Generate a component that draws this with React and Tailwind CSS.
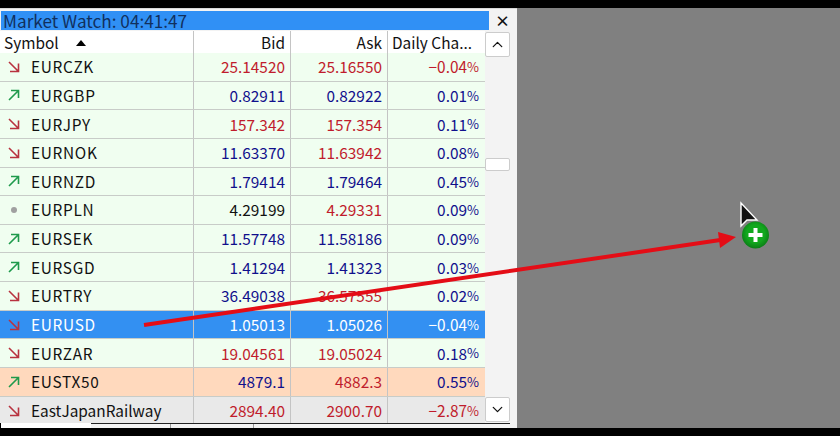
import { ChevronUp, ChevronDown } from 'lucide-react';

const R = 'text-[#c01c2c]';
const B = 'text-[#10108c]';
const K = 'text-[#111111]';

const rows = [
  ['d', 'EURCZK', '25.14520', R, '25.16550', R, '−0.04%', R],
  ['u', 'EURGBP', '0.82911', B, '0.82922', B, '0.01%', B],
  ['d', 'EURJPY', '157.342', R, '157.354', R, '0.11%', B],
  ['d', 'EURNOK', '11.63370', B, '11.63942', R, '0.08%', B],
  ['u', 'EURNZD', '1.79414', B, '1.79464', B, '0.45%', B],
  ['n', 'EURPLN', '4.29199', K, '4.29331', R, '0.09%', B],
  ['u', 'EURSEK', '11.57748', B, '11.58186', B, '0.09%', B],
  ['u', 'EURSGD', '1.41294', B, '1.41323', B, '0.03%', B],
  ['d', 'EURTRY', '36.49038', B, '36.57555', R, '0.02%', B],
  ['d', 'EURUSD', '1.05013', '', '1.05026', '', '−0.04%', '', 'bg-[#3390f2] text-white'],
  ['d', 'EURZAR', '19.04561', R, '19.05024', R, '0.18%', B],
  ['u', 'EUSTX50', '4879.1', B, '4882.3', R, '0.55%', B, 'bg-[#ffd9bd]'],
  ['d', 'EastJapanRailway', '2894.40', R, '2900.70', R, '−2.87%', R, 'bg-[#e9e9e9]'],
];

const Trend = ({ dir }) => {
  if (dir === 'n') return <span className="block w-[6px] h-[6px] ml-[11px] mr-[14px] rounded-full bg-[#a0a0a0]" />;
  const up = dir === 'u';
  return (
    <svg width="12" height="12" viewBox="0 0 12 12" className="ml-[8px] mr-[11px] shrink-0" fill="none" strokeWidth="1.6" stroke={up ? '#1f9a4c' : '#b8323f'}>
      {up ? <path d="M1 11 10 2M3 1.5h7.5V9" /> : <path d="M1 1 10 10M10.5 2.5v8H2" />}
    </svg>
  );
};

const Row = ({ row }) => {
  const [dir, name, bid, bidC, ask, askC, chg, chgC, bg] = row;
  return (
    <div className={`grid grid-cols-[194px_97px_97px_97px] h-[28.65px] shrink-0 border-b border-[#c8ccc8] ${bg || 'bg-[#f0fef0]'}`}>
      <div className="flex items-center border-r border-[#c4c4c4] min-w-0">
        <Trend dir={dir} />
        <span className={name === name.toUpperCase() ? 'tracking-[0.7px]' : ''}>{name}</span>
      </div>
      <div className={`flex items-center justify-end pr-[5px] border-r border-[#c4c4c4] ${bidC}`}>{bid}</div>
      <div className={`flex items-center justify-end pr-[5px] border-r border-[#c4c4c4] ${askC}`}>{ask}</div>
      <div className={`flex items-center justify-end pr-[6px] ${chgC}`}>
        {chg.slice(0, -1)}
        <span className="text-[13px]">%</span>
      </div>
    </div>
  );
};

export default function App() {
  return (
    <div className="relative w-[840px] h-[436px] overflow-hidden bg-black flex items-start pt-[8px] text-[15.4px] text-[#111111] font-['Noto_Sans_CJK_JP','Noto_Sans',sans-serif]">
      <div className="w-[517px] h-[420px] shrink-0 bg-[#f3f3f3] flex flex-col pt-[2px] border-t border-[#d8d8d8]">
        {/* title bar */}
        <div className="flex items-center h-[19px] shrink-0">
          <div className="ml-px w-[488px] h-full bg-[#3090f5] pl-[2px] flex items-center text-[#10305f] text-[17.2px] leading-none">
            Market Watch: 04:41:47
          </div>
          <div className="w-[27px] text-center text-[#111111] text-[15px] leading-none font-bold">×</div>
        </div>
        <div className="flex flex-1 min-h-0 mt-px">
          <div className="w-[485px] flex flex-col overflow-hidden h-[392px]">
            {/* header */}
            <div className="grid grid-cols-[194px_97px_97px_97px] h-[22px] shrink-0 bg-white">
              <div className="flex items-center pl-[4px] border-r border-[#c4c4c4]">
                Symbol
                <span className="ml-[17px] w-0 h-0 border-x-[5px] border-x-transparent border-b-[6px] border-b-black" />
              </div>
              <div className="flex items-center justify-end pr-[5px] border-r border-[#c4c4c4]">Bid</div>
              <div className="flex items-center justify-end pr-[5px] border-r border-[#c4c4c4]">Ask</div>
              <div className="flex items-center pl-[4px]">Daily Cha...</div>
            </div>
            {rows.map((row) => (
              <Row key={row[1]} row={row} />
            ))}
          </div>
          {/* scrollbar */}
          <div className="w-[25px] h-[390px] mt-px flex flex-col items-stretch">
            <div className="h-[25px] bg-white border border-[#cccccc] rounded-[2px] flex items-center justify-center">
              <ChevronUp size={17} strokeWidth={1.8} color="#111" />
            </div>
            <div className="mt-[101px] h-[13px] bg-white border border-[#cccccc] rounded-[2px]" />
            <div className="mt-auto h-[25px] bg-white border border-[#cccccc] rounded-[2px] flex items-center justify-center">
              <ChevronDown size={17} strokeWidth={1.8} color="#111" />
            </div>
          </div>
        </div>
        {/* tab strip */}
        <div className="flex h-[5px] w-[510px] shrink-0">
          <div className="w-[91px] bg-white border-l border-black" />
          <div className="flex-1 border-t border-[#222222] flex">
            <div className="w-[80px] border-r border-[#999999]" />
            <div className="w-[83px] border-r border-[#999999]" />
          </div>
        </div>
      </div>
      <div className="flex-1 h-[420px] bg-[#808080]" />

      {/* annotation arrow and drag cursor */}
      <svg className="absolute inset-0" width="840" height="436" viewBox="0 0 840 436">
        <defs>
          <radialGradient id="badge" cx="50%" cy="45%" r="55%">
            <stop offset="60%" stopColor="#12a81e" />
            <stop offset="100%" stopColor="#0b7d16" />
          </radialGradient>
        </defs>
        <line x1="144" y1="325" x2="722" y2="239.8" stroke="#e40d16" strokeWidth="4" />
        <polygon points="736,237 718,232 720,248" fill="#e40d16" />
        <polygon points="741,203 741,226 747,220 757,220" fill="#111" stroke="#fff" strokeWidth="1.4" />
        <circle cx="755.5" cy="235" r="13.5" fill="url(#badge)" />
        <path d="M755.5 228v14M748.5 235h14" stroke="#fff" strokeWidth="4" />
      </svg>
    </div>
  );
}
